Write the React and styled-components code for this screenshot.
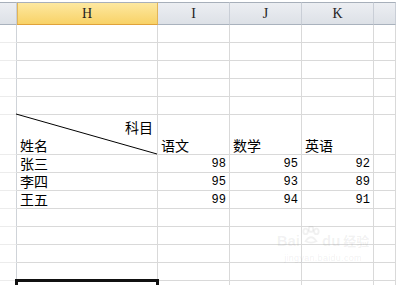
import React from "react";
import styled, { createGlobalStyle, css } from "styled-components";

const GlobalStyle = createGlobalStyle`
  html, body { margin: 0; padding: 0; background: #fff; }
  body { width: 396px; height: 288px; overflow: hidden; }
`;

const Page = styled.div`
  position: relative;
  width: 396px;
  height: 288px;
  overflow: hidden;
  background: #fff;
`;

const Viewport = styled.div`
  height: 285px;
  overflow: hidden;
  padding-top: 2px;
  box-sizing: border-box;
`;

const Sheet = styled.div`
  display: grid;
  grid-template-columns: 17px 141px 72px 72px 72px 1fr;
  font-family: "Noto Sans CJK SC", sans-serif;
  font-size: 14px;
  color: #000;
`;

const ColHead = styled.div`
  height: 23px;
  box-sizing: border-box;
  border-top: 1px solid #a7afba;
  border-bottom: 1px solid #a9b2bd;
  border-right: 1px solid #c9ced6;
  background: linear-gradient(#eceef2, #dde1e7);
  font-family: "Liberation Serif", serif;
  font-size: 14px;
  color: #222;
  display: flex;
  align-items: center;
  justify-content: center;
  padding-top: 1px;
  ${(p) =>
    p.active &&
    css`
      background: linear-gradient(#fde8a0, #f8d267);
      border-bottom-color: #e0a23a;
      border-right-color: #e2b558;
      box-shadow: inset 1px 0 0 #e2b558;
    `}
`;

const Cell = styled.div`
  position: relative;
  height: ${(p) => p.h || 18}px;
  box-sizing: border-box;
  border-right: 1px solid #d9d9d9;
  border-bottom: 1px solid #d9d9d9;
  display: flex;
  align-items: flex-end;
  justify-content: ${(p) => (p.num ? "flex-end" : "flex-start")};
  padding: 0 3px;
  line-height: 17px;
  white-space: nowrap;
  ${(p) =>
    p.num &&
    css`
      font-family: "Liberation Mono", monospace;
      font-size: 12px;
      line-height: 15px;
    `}
`;

const RowHead = styled.div`
  height: ${(p) => p.h || 18}px;
  box-sizing: border-box;
  border-right: 1px solid #cfd3d8;
  border-bottom: 1px solid #ececec;
`;

const Split = styled.div`
  display: flex;
  flex-direction: column;
  width: 100%;
  line-height: 18px;
`;

const TopRight = styled.span`
  align-self: flex-end;
  padding-right: 1px;
`;

const Diagonal = styled.svg`
  position: absolute;
  left: -1px;
  top: -1px;
  width: calc(100% + 1px);
  height: calc(100% + 1px);
  overflow: visible;
`;

const Selection = styled.div`
  position: absolute;
  left: -2px;
  top: -2px;
  right: -2px;
  bottom: -2px;
  border: 3px solid #111;
`;

const Watermark = styled.div`
  position: absolute;
  left: 268px;
  top: 226px;
  width: 110px;
  color: rgba(120, 120, 120, 0.1);
  font-family: "Liberation Sans", sans-serif;
  text-align: center;
`;

const MarkTop = styled.div`
  display: flex;
  align-items: flex-end;
  justify-content: center;
  gap: 1px;
  font-size: 15px;
  font-weight: bold;
  line-height: 18px;
  white-space: nowrap;
`;

const MarkCjk = styled.span`
  font-family: "Noto Sans CJK SC", sans-serif;
  font-size: 13px;
  margin-left: 2px;
`;

const MarkUrl = styled.div`
  font-size: 9px;
  margin-top: 3px;
  letter-spacing: 0.3px;
`;

const Paw = styled.svg`
  margin-bottom: 6px;
`;

const columns = ["H", "I", "J", "K"];

const data = [
  { name: "张三", scores: [98, 95, 92] },
  { name: "李四", scores: [95, 93, 89] },
  { name: "王五", scores: [99, 94, 91] },
];

const EmptyRow = ({ selected }) => (
  <>
    <RowHead />
    <Cell>{selected && <Selection />}</Cell>
    <Cell />
    <Cell />
    <Cell />
    <Cell />
  </>
);

export default function App() {
  return (
    <Page>
      <GlobalStyle />
      <Viewport>
        <Sheet>
          <ColHead />
          {columns.map((c) => (
            <ColHead key={c} active={c === "H"}>
              {c}
            </ColHead>
          ))}
          <ColHead />

          {[0, 1, 2, 3, 4].map((i) => (
            <EmptyRow key={"a" + i} />
          ))}

          <RowHead h={40} />
          <Cell h={40}>
            <Diagonal>
              <line x1="0" y1="0" x2="100%" y2="100%" stroke="#000" strokeWidth="1" />
            </Diagonal>
            <Split>
              <TopRight>科目</TopRight>
              <span>姓名</span>
            </Split>
          </Cell>
          <Cell h={40}>语文</Cell>
          <Cell h={40}>数学</Cell>
          <Cell h={40}>英语</Cell>
          <Cell h={40} />

          {data.map((row) => (
            <React.Fragment key={row.name}>
              <RowHead />
              <Cell>{row.name}</Cell>
              {row.scores.map((s, i) => (
                <Cell key={i} num>
                  {s}
                </Cell>
              ))}
              <Cell />
            </React.Fragment>
          ))}

          {[0, 1, 2, 3, 4, 5].map((i) => (
            <EmptyRow key={"b" + i} selected={i === 4} />
          ))}
        </Sheet>
      </Viewport>

      <Watermark>
        <MarkTop>
          <span>Bai</span>
          <Paw width="20" height="18" viewBox="0 0 22 20">
            <g fill="none" stroke="currentColor" strokeWidth="2">
              <ellipse cx="5" cy="6" rx="2.5" ry="3" />
              <ellipse cx="11" cy="3.5" rx="2.5" ry="3" />
              <ellipse cx="17" cy="6" rx="2.5" ry="3" />
              <path d="M5 17 Q11 8 17 17 Q11 20 5 17 Z" />
            </g>
          </Paw>
          <span>du</span>
          <MarkCjk>经验</MarkCjk>
        </MarkTop>
        <MarkUrl>jingyan.baidu.com</MarkUrl>
      </Watermark>
    </Page>
  );
}
